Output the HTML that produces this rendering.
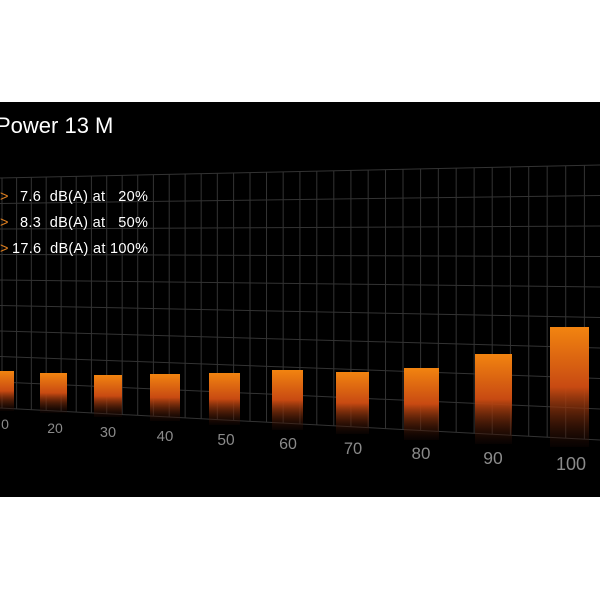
<!DOCTYPE html>
<html><head><meta charset="utf-8"><style>
html,body{margin:0;padding:0;background:#fff;width:600px;height:600px;overflow:hidden}
svg{display:block}
text{font-family:"Liberation Sans",Arial,sans-serif;white-space:pre}
</style></head><body>
<svg width="600" height="600" viewBox="0 0 600 600" xmlns="http://www.w3.org/2000/svg">
<defs>
<linearGradient id="g" x1="0" y1="0" x2="0" y2="1">
<stop offset="0" stop-color="#f28410"/>
<stop offset="0.5" stop-color="#c84a12"/>
<stop offset="1" stop-color="#1a0804" stop-opacity="0.3"/>
</linearGradient>
</defs>
<rect x="0" y="102" width="600" height="395" fill="#000"/>
<g stroke="#333" stroke-width="1">
<line x1="0" y1="178" x2="600" y2="165"/>
<line x1="0" y1="203.5" x2="600" y2="195.5"/>
<line x1="0" y1="229" x2="600" y2="226"/>
<line x1="0" y1="254.5" x2="600" y2="256.5"/>
<line x1="0" y1="280" x2="600" y2="287"/>
<line x1="0" y1="305.5" x2="600" y2="317.5"/>
<line x1="0" y1="331" x2="600" y2="348"/>
<line x1="0" y1="356.5" x2="600" y2="378.5"/>
<line x1="0" y1="382" x2="600" y2="409"/>
<line x1="0" y1="408" x2="600" y2="440"/>
</g>
<g stroke="#333" stroke-width="1" id="v"></g>
<g fill="url(#g)">
<rect x="0" y="371" width="14" height="40"/>
<rect x="40" y="373" width="27" height="40"/>
<rect x="94" y="375" width="28" height="42"/>
<rect x="150" y="374" width="30" height="47"/>
<rect x="209" y="373" width="31" height="52"/>
<rect x="272" y="370" width="31" height="60"/>
<rect x="336" y="372" width="33" height="62"/>
<rect x="404" y="368" width="35" height="72"/>
<rect x="475" y="354" width="37" height="90"/>
<rect x="550" y="327" width="39" height="120"/>
</g>
<g fill="#8a8a8a" text-anchor="middle">
<text x="5" y="429" font-size="14">0</text>
<text x="55" y="433" font-size="14">20</text>
<text x="108" y="437" font-size="14.5">30</text>
<text x="165" y="441" font-size="15">40</text>
<text x="226" y="445" font-size="15.5">50</text>
<text x="288" y="449" font-size="16">60</text>
<text x="353" y="454" font-size="16.5">70</text>
<text x="421" y="459" font-size="17">80</text>
<text x="493" y="464" font-size="17.5">90</text>
<text x="571" y="470" font-size="18">100</text>
</g>
<text x="-4" y="133" font-size="22" fill="#fff">Power 13 M</text>
<g font-size="14.5" fill="#fff" letter-spacing="0.3">
<text x="0" y="201" fill="#e08020">&gt;</text><text x="20" y="201">7.6  dB(A) at   20%</text>
<text x="0" y="227" fill="#e08020">&gt;</text><text x="20" y="227">8.3  dB(A) at   50%</text>
<text x="0" y="253" fill="#e08020">&gt;</text><text x="12" y="253">17.6  dB(A) at 100%</text>
</g>
<script>
(function(){var g=document.getElementById('v');var ns='http://www.w3.org/2000/svg';
var x=2,s=14.6;while(x<600){var t=x/600;var y1=178-13*t,y2=408+32*t;
var l=document.createElementNS(ns,'line');l.setAttribute('x1',x);l.setAttribute('x2',x);l.setAttribute('y1',y1);l.setAttribute('y2',y2);g.appendChild(l);x+=s;s+=0.12;}})();
</script>
</svg>
</body></html>
